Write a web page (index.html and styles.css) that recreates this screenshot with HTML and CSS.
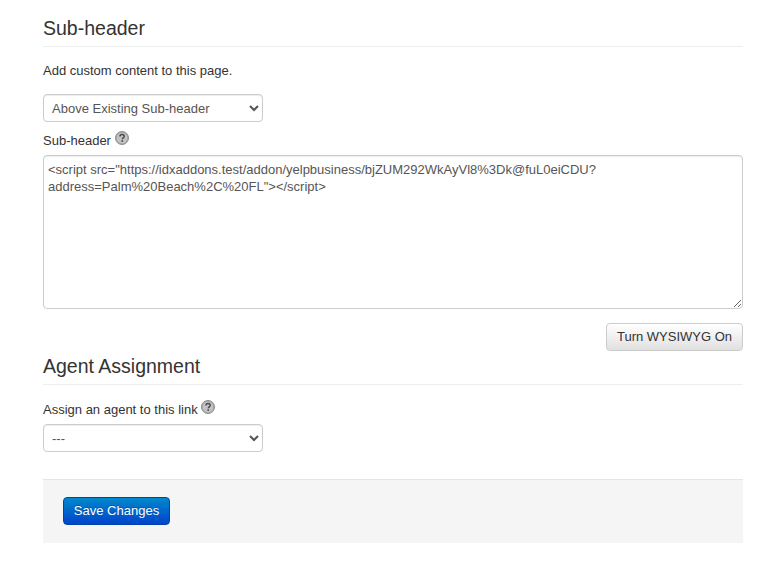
FILE: index.html
```html
<!DOCTYPE html>
<html lang="en">
<head>
<meta charset="utf-8">
<title>Sub-header</title>
<link rel="stylesheet" href="styles.css">
</head>
<body>
<main class="page">
  <h3 class="section-title">Sub-header</h3>
  <p class="intro">Add custom content to this page.</p>
  <select class="field-select"><option>Above Existing Sub-header</option></select>
  <label class="field-label" for="sub">Sub-header
    <svg class="help" viewBox="0 0 14 14" aria-hidden="true"><circle cx="7" cy="7" r="6.5" fill="#a9a9a9" stroke="#8f8f8f"/><circle cx="7" cy="7" r="5.2" fill="#c4c4c4"/><path d="M4.9 5.5C5 4.2 6 3.6 7.1 3.6c1.3 0 2.1.8 2.1 1.8 0 1.5-1.9 1.5-1.9 2.9" fill="none" stroke="#4a4a4a" stroke-width="1.5"/><rect x="6.4" y="9.2" width="1.7" height="1.6" fill="#4a4a4a"/></svg>
  </label>
  <textarea id="sub" class="field-text"><script src="https://idxaddons.test/addon/yelpbusiness/bjZUM292WkAyVl8%3Dk@fuL0eiCDU?address=Palm%20Beach%2C%20FL"></script></textarea>
  <div class="toggle-row"><button class="btn" type="button">Turn WYSIWYG On</button></div>
  <h3 class="section-title section-agent">Agent Assignment</h3>
  <label class="field-label agent-label">Assign an agent to this link
    <svg class="help" viewBox="0 0 14 14" aria-hidden="true"><circle cx="7" cy="7" r="6.5" fill="#a9a9a9" stroke="#8f8f8f"/><circle cx="7" cy="7" r="5.2" fill="#c4c4c4"/><path d="M4.9 5.5C5 4.2 6 3.6 7.1 3.6c1.3 0 2.1.8 2.1 1.8 0 1.5-1.9 1.5-1.9 2.9" fill="none" stroke="#4a4a4a" stroke-width="1.5"/><rect x="6.4" y="9.2" width="1.7" height="1.6" fill="#4a4a4a"/></svg>
  </label>
  <select class="field-select"><option>---</option></select>
  <div class="actions"><button class="btn-primary" type="button">Save Changes</button></div>
</main>
</body>
</html>
```
FILE: styles.css
```css
* { box-sizing: border-box; }
html, body { margin: 0; background: #fff; }
body { font-family: "Liberation Sans", Arial, sans-serif; font-size: 13px; line-height: 20px; color: #333; }
.page { width: 700px; margin-left: 43px; padding-top: 16px; }
.section-title { margin: 0; height: 31px; font-size: 19.5px; line-height: 24px; font-weight: 400; color: #333; border-bottom: 1px solid #eee; }
.intro { margin: 0; padding-top: 14px; height: 47px; font-size: 13px; line-height: 20px; }
.field-select { display: block; width: 220px; height: 28px; padding: 0 4px; font-family: inherit; font-size: 13px; color: #555; background: #fff; border: 1px solid #ccc; border-radius: 4px; box-shadow: inset 0 1px 1px rgba(0,0,0,.075); }
.field-label { display: flex; align-items: center; gap: 4px; height: 33px; padding-top: 5px; font-size: 13px; }
.help { width: 14px; height: 14px; margin-top: -6px; }
.field-text { display: block; width: 700px; height: 154px; padding: 5px 4px; font-family: inherit; font-size: 13px; line-height: 17px; color: #555; border: 1px solid #ccc; border-radius: 4px; box-shadow: inset 0 1px 1px rgba(0,0,0,.075); }
.toggle-row { display: flex; justify-content: flex-end; padding-top: 14px; }
.btn { height: 28px; width: 137px; padding: 0 0 2px; font-family: inherit; font-size: 13px; color: #333; background: linear-gradient(#fff, #e0e0e0); border: 1px solid #ccc; border-radius: 4px; }
.section-agent { margin-top: 3px; }
.agent-label { height: 39px; padding-top: 11px; gap: 3px; }
.actions { margin-top: 27px; height: 64px; padding: 17px 20px; background: #f5f5f5; border-top: 1px solid #e5e5e5; }
.btn-primary { display: block; width: 107px; height: 28px; padding: 0 0 2px; font-family: inherit; font-size: 13px; color: #fff; text-shadow: 0 -1px 0 rgba(0,0,0,.25); background: linear-gradient(#08c, #04c); border: 1px solid #04a; border-radius: 4px; }
```
